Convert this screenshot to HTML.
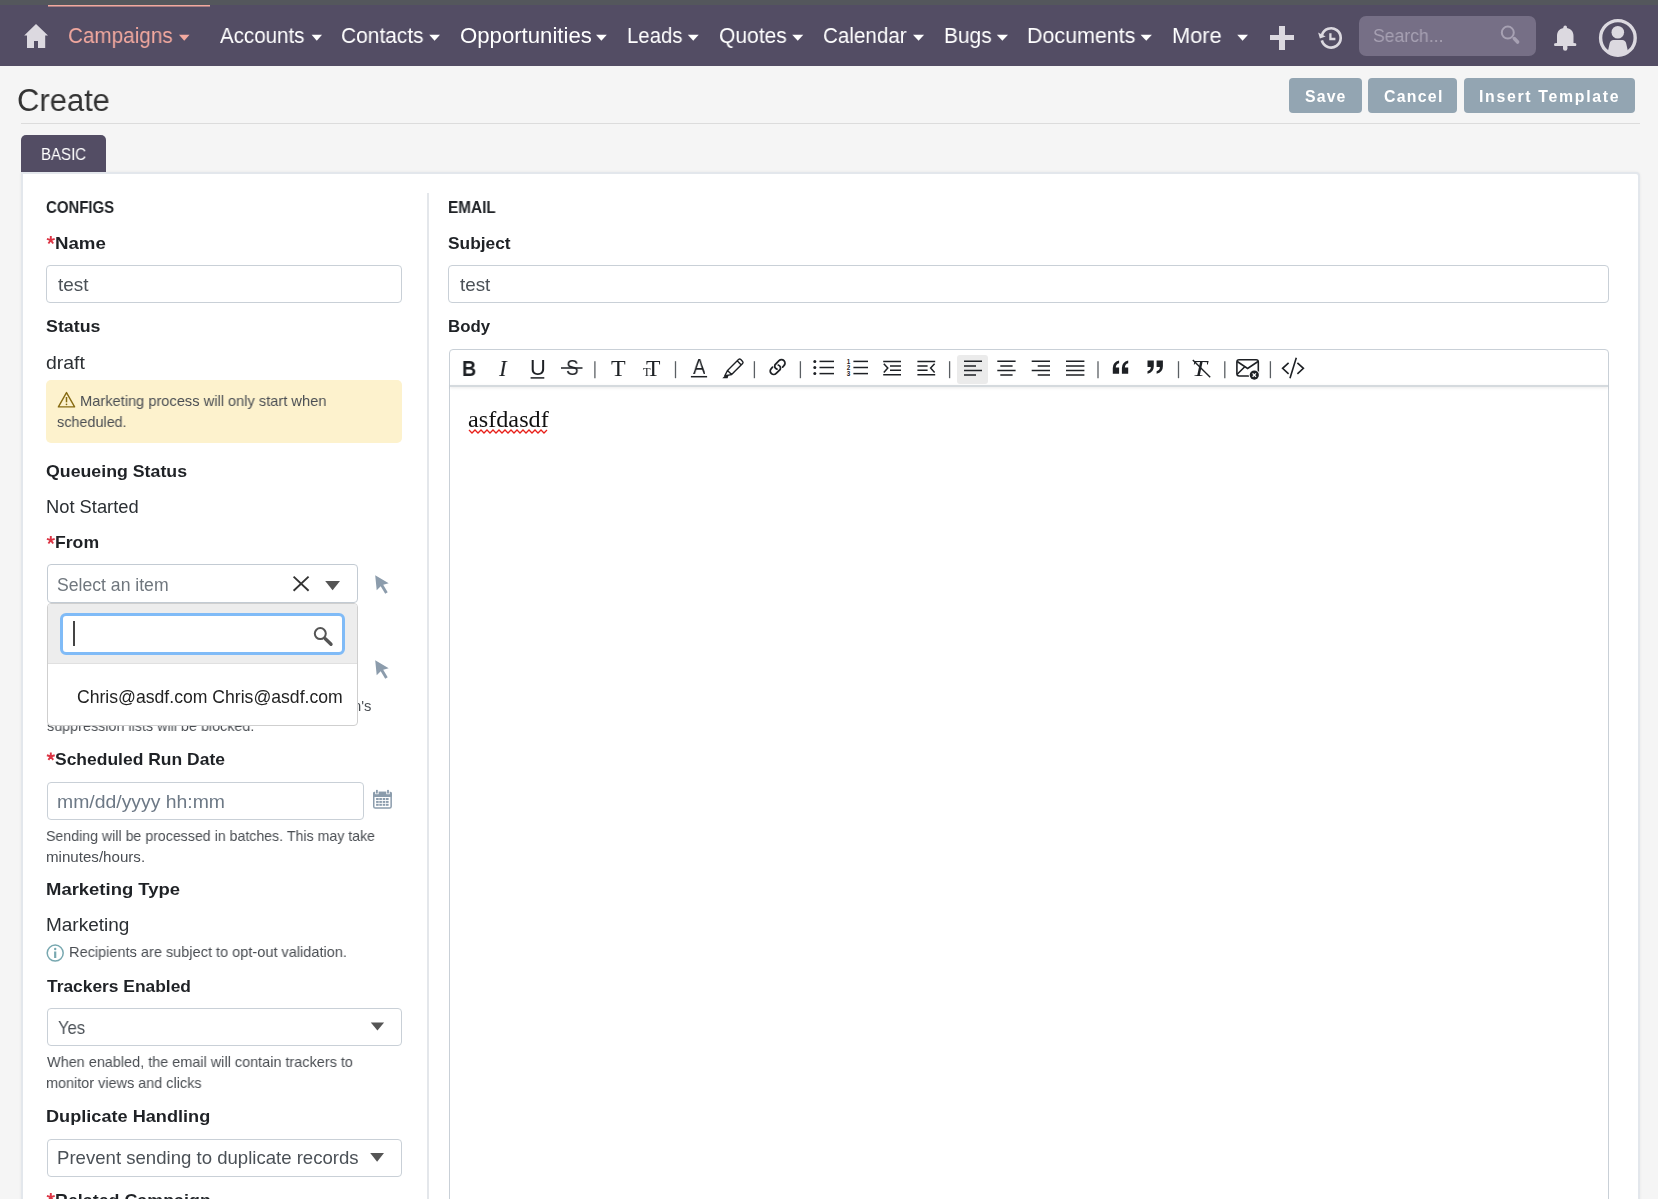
<!DOCTYPE html>
<html><head><meta charset="utf-8"><title>Create</title><style>
*{box-sizing:border-box;margin:0;padding:0}
html,body{width:1658px;height:1199px;overflow:hidden;background:#f5f5f5;font-family:"Liberation Sans",sans-serif}
.a{position:absolute}
.t{position:absolute;white-space:nowrap;line-height:0;transform-origin:0 0;will-change:transform}
svg{position:absolute;overflow:visible}
</style></head>
<body>
<div class="a" style="left:0;top:0;width:1658px;height:5px;background:#54575c"></div>
<div class="a" style="left:0;top:5px;width:1658px;height:61px;background:#534d64"></div>
<div class="a" style="left:48px;top:5px;width:162px;height:1px;background:#f3a99f"></div><div class="a" style="left:48px;top:6px;width:162px;height:1px;background:#a77d83"></div>
<svg style="left:0;top:0" width="1" height="1"><path d="M36 24 L48 35.5 L45.2 35.5 L45.2 48 L38 48 L38 41 L34 41 L34 48 L27 48 L27 35.5 L24.2 35.5 Z" fill="#dcd9e0"/></svg>
<svg style="left:0;top:0" width="1" height="1"><path d="M179 34.8 L189.5 34.8 L184.25 40.8 Z" fill="#f3a99f"/></svg>
<svg style="left:0;top:0" width="1" height="1"><path d="M311.6 34.8 L322 34.8 L316.8 40.8 Z" fill="#ffffff"/></svg>
<svg style="left:0;top:0" width="1" height="1"><path d="M429.2 34.8 L440 34.8 L434.6 40.8 Z" fill="#ffffff"/></svg>
<svg style="left:0;top:0" width="1" height="1"><path d="M596 34.8 L606.8 34.8 L601.4 40.8 Z" fill="#ffffff"/></svg>
<svg style="left:0;top:0" width="1" height="1"><path d="M687.8 34.8 L698.7 34.8 L693.25 40.8 Z" fill="#ffffff"/></svg>
<svg style="left:0;top:0" width="1" height="1"><path d="M792.2 34.8 L803.3 34.8 L797.75 40.8 Z" fill="#ffffff"/></svg>
<svg style="left:0;top:0" width="1" height="1"><path d="M913 34.8 L924.1 34.8 L918.55 40.8 Z" fill="#ffffff"/></svg>
<svg style="left:0;top:0" width="1" height="1"><path d="M996.8 34.8 L1008 34.8 L1002.4 40.8 Z" fill="#ffffff"/></svg>
<svg style="left:0;top:0" width="1" height="1"><path d="M1140.6 34.8 L1151.9 34.8 L1146.25 40.8 Z" fill="#ffffff"/></svg>
<svg style="left:0;top:0" width="1" height="1"><path d="M1237.2 34.8 L1248 34.8 L1242.6 40.8 Z" fill="#ffffff"/></svg>
<div class="a" style="left:1279.2px;top:26px;width:6px;height:24px;background:#dcd9e0"></div>
<div class="a" style="left:1270px;top:35px;width:24px;height:5.2px;background:#dcd9e0"></div>
<svg style="left:0;top:0" width="1" height="1"><path d="M1321.83 40.38 A9.6 9.6 0 1 0 1321.92 35.09" fill="none" stroke="#dcd9e0" stroke-width="2.7"/><path d="M1318.1 32.6 L1325.6 36.6 L1319.9 38.4 Z" fill="#dcd9e0"/><path d="M1330.4 33.2 L1330.4 39 L1335.4 39" fill="none" stroke="#dcd9e0" stroke-width="2.3"/></svg>
<div class="a" style="left:1359px;top:16px;width:177px;height:40px;border-radius:7px;background:#766f86"></div>
<svg style="left:0;top:0" width="1" height="1"><circle cx="1507.8" cy="32.6" r="6" fill="none" stroke="#a7a1b3" stroke-width="2"/><path d="M1514.3 38.6 L1517.6 42" stroke="#a7a1b3" stroke-width="3.6" stroke-linecap="round"/></svg>
<svg style="left:0;top:0" width="1" height="1"><circle cx="1565.2" cy="27.2" r="1.8" fill="#dcd9e0"/><path d="M1557 43 L1557 36 C1557 30.5 1560.5 28 1565.2 28 C1569.9 28 1573.5 30.5 1573.5 36 L1573.5 43 L1575.6 43.2 C1576.6 43.5 1576.6 45.8 1575.6 46 L1554.8 46 C1553.8 45.8 1553.8 43.5 1554.8 43.2 Z" fill="#dcd9e0"/><path d="M1563 46 L1563 48.5 A2.2 2.2 0 0 0 1567.4 48.5 L1567.4 46 Z" fill="#dcd9e0"/></svg>
<svg style="left:0;top:0" width="1" height="1"><circle cx="1617.9" cy="37.9" r="17.3" fill="none" stroke="#dcd9e0" stroke-width="3.4"/><circle cx="1617.8" cy="32.3" r="6.3" fill="#dcd9e0"/><path d="M1607.6 52.5 L1609.6 43.5 C1610 41.4 1611.6 40.1 1613.5 40.1 L1622.3 40.1 C1624.2 40.1 1625.8 41.4 1626.2 43.5 L1628.2 52.5 C1622 56.5 1614 56.5 1607.6 52.5 Z" fill="#dcd9e0"/></svg>
<div class="a" style="left:21px;top:123px;width:1619px;height:1px;background:#dcdcdc"></div>
<div class="a" style="left:1289px;top:78px;width:73.0px;height:35px;border-radius:4px;background:#93a5b2"></div>
<div class="a" style="left:1368px;top:78px;width:89.4px;height:35px;border-radius:4px;background:#93a5b2"></div>
<div class="a" style="left:1464px;top:78px;width:171.0px;height:35px;border-radius:4px;background:#93a5b2"></div>
<div class="a" style="left:21px;top:135px;width:85px;height:37px;border-radius:5px 5px 0 0;background:#534d64"></div>
<div class="a" style="left:21px;top:172px;width:1619px;height:1100px;background:#fff;border:2px solid #e3e7ec;border-radius:0 4px 0 0;box-shadow:0 0 3px rgba(0,0,0,0.06)"></div>
<div class="a" style="left:427px;top:193px;width:2px;height:1100px;background:#e4e7eb"></div>
<div class="a" style="left:46px;top:265px;width:356px;height:38px;border:1px solid #c9d0d7;border-radius:4px;background:#fff;"></div>
<div class="a" style="left:448px;top:265px;width:1161px;height:38px;border:1px solid #c9d0d7;border-radius:4px;background:#fff;"></div>
<div class="a" style="left:46px;top:380px;width:356px;height:63px;border-radius:5px;background:#fdf2cd"></div>
<svg style="left:0;top:0" width="1" height="1"><path d="M66.5 392.6 L74.6 406.9 L58.4 406.9 Z" fill="none" stroke="#876b12" stroke-width="1.4" stroke-linejoin="round"/><path d="M66.5 397 L66.5 402.3" stroke="#876b12" stroke-width="1.5"/><circle cx="66.5" cy="404.3" r="0.85" fill="#876b12"/></svg>
<div class="a" style="left:47px;top:564px;width:310.5px;height:38.5px;border:1px solid #c3cbd3;border-radius:4px;background:#fff;"></div>
<svg style="left:0;top:0" width="1" height="1"><path d="M293.6 576.6 L308.6 590.8 M308.6 576.6 L293.6 590.8" stroke="#333" stroke-width="1.9"/><path d="M325.2 581 L340 581 L332.6 590.2 Z" fill="#555"/></svg>
<svg style="left:0;top:0" width="1" height="1"><path d="M375.2 575.3 L388.7 583.3 L383.2 584.8 L387.7 592.3 L385.2 593.8 L380.7 586.3 L376.7 590.3 Z" fill="#8c9cac"/></svg>
<svg style="left:0;top:0" width="1" height="1"><path d="M375.2 660.3 L388.7 668.3 L383.2 669.8 L387.7 677.3 L385.2 678.8 L380.7 671.3 L376.7 675.3 Z" fill="#8c9cac"/></svg>
<div class="a" style="left:46.5px;top:781.5px;width:317.5px;height:38.0px;border:1px solid #c9d0d7;border-radius:4px;background:#fff;"></div>
<svg style="left:0;top:0" width="1" height="1"><rect x="373.75" y="792.4" width="17.4" height="15.7" rx="1.6" fill="none" stroke="#8b9cac" stroke-width="1.5"/><rect x="373" y="791.7" width="18.9" height="5.2" rx="1.5" fill="#8b9cac"/><rect x="375.2" y="791" width="3.4" height="3.2" fill="#fff"/><rect x="386.3" y="791" width="3.4" height="3.2" fill="#fff"/><rect x="376" y="789.9" width="1.8" height="3.6" fill="#8b9cac"/><rect x="387.1" y="789.9" width="1.8" height="3.6" fill="#8b9cac"/><rect x="376.1" y="798.0" width="2.6" height="2" fill="#8b9cac"/><rect x="376.1" y="800.9" width="2.6" height="2" fill="#8b9cac"/><rect x="376.1" y="803.8" width="2.6" height="2" fill="#8b9cac"/><rect x="379.3" y="798.0" width="2.6" height="2" fill="#8b9cac"/><rect x="379.3" y="800.9" width="2.6" height="2" fill="#8b9cac"/><rect x="379.3" y="803.8" width="2.6" height="2" fill="#8b9cac"/><rect x="382.7" y="798.0" width="2.6" height="2" fill="#8b9cac"/><rect x="382.7" y="800.9" width="2.6" height="2" fill="#8b9cac"/><rect x="382.7" y="803.8" width="2.6" height="2" fill="#8b9cac"/><rect x="386.0" y="798.0" width="2.6" height="2" fill="#8b9cac"/><rect x="386.0" y="800.9" width="2.6" height="2" fill="#8b9cac"/><rect x="386.0" y="803.8" width="2.6" height="2" fill="#8b9cac"/></svg>
<svg style="left:0;top:0" width="1" height="1"><circle cx="55.2" cy="953.1" r="8" fill="none" stroke="#78a8b0" stroke-width="1.5"/><circle cx="55.2" cy="949" r="1.2" fill="#78a8b0"/><path d="M55.2 951.5 L55.2 958" stroke="#78a8b0" stroke-width="2.2"/></svg>
<div class="a" style="left:47px;top:1007.5px;width:355px;height:38.0px;border:1px solid #c9d0d7;border-radius:4px;background:#fff;"></div>
<svg style="left:0;top:0" width="1" height="1"><path d="M370.8 1022.4 L384.1 1022.4 L377.45 1030.4 Z" fill="#555"/></svg>
<div class="a" style="left:47px;top:1138.5px;width:355px;height:38.0px;border:1px solid #c9d0d7;border-radius:4px;background:#fff;"></div>
<svg style="left:0;top:0" width="1" height="1"><path d="M370.2 1153 L384 1153 L377.1 1161.8 Z" fill="#555"/></svg>
<div class="a" style="left:449px;top:349px;width:1160px;height:900px;border:1.5px solid #c9d0d7;border-radius:4px 4px 0 0;background:#fff"></div>
<div class="a" style="left:450px;top:384.5px;width:1158px;height:2px;background:#d5dade;box-shadow:0 1px 3px rgba(0,0,0,0.10)"></div>
<div class="a" style="left:957.2px;top:354.6px;width:30.5px;height:29.4px;border-radius:3px;background:#ebebeb"></div>
<svg style="left:0;top:0" width="1" height="1"><path d="M50.80 240.20 L50.80 236.10 M50.80 240.20 L54.70 238.93 M50.80 240.20 L53.21 243.52 M50.80 240.20 L48.39 243.52 M50.80 240.20 L46.90 238.93 " stroke="#dc3545" stroke-width="1.9"/></svg>
<svg style="left:0;top:0" width="1" height="1"><path d="M50.80 540.20 L50.80 536.10 M50.80 540.20 L54.70 538.93 M50.80 540.20 L53.21 543.52 M50.80 540.20 L48.39 543.52 M50.80 540.20 L46.90 538.93 " stroke="#dc3545" stroke-width="1.9"/></svg>
<svg style="left:0;top:0" width="1" height="1"><path d="M50.80 756.50 L50.80 752.40 M50.80 756.50 L54.70 755.23 M50.80 756.50 L53.21 759.82 M50.80 756.50 L48.39 759.82 M50.80 756.50 L46.90 755.23 " stroke="#dc3545" stroke-width="1.9"/></svg>
<svg style="left:0;top:0" width="1" height="1"><path d="M50.80 1197.20 L50.80 1193.10 M50.80 1197.20 L54.70 1195.93 M50.80 1197.20 L53.21 1200.52 M50.80 1197.20 L48.39 1200.52 M50.80 1197.20 L46.90 1195.93 " stroke="#dc3545" stroke-width="1.9"/></svg>
<div class="a" style="left:47px;top:603px;width:311px;height:123px;border:1px solid #cfcfcf;border-radius:4px;background:#fff;z-index:5;overflow:hidden"><div style="position:absolute;left:0;top:0;width:100%;height:60px;background:#ededed;border-bottom:1px solid #e0e0e0"></div></div>
<div class="a" style="left:60px;top:612.5px;width:284.5px;height:42px;border:3px solid #80bbf7;border-radius:6px;background:#fff;z-index:6"></div>
<div class="a" style="left:73px;top:621px;width:2px;height:25px;background:#444;z-index:7"></div>
<svg style="left:0;top:0;z-index:7" width="1" height="1"><circle cx="320.3" cy="633.6" r="5.5" fill="none" stroke="#555" stroke-width="2"/><path d="M325.3 638.8 L331 644.3" stroke="#555" stroke-width="3.4" stroke-linecap="round"/></svg>
<svg style="left:0;top:0" width="1" height="1"><path d="M594.9 361.2 L594.9 378.2" stroke="#5a5f63" stroke-width="1.3"/><path d="M675.5 361.2 L675.5 378.2" stroke="#5a5f63" stroke-width="1.3"/><path d="M754.4 361.2 L754.4 378.2" stroke="#5a5f63" stroke-width="1.3"/><path d="M800.4 361.2 L800.4 378.2" stroke="#5a5f63" stroke-width="1.3"/><path d="M949.6 361.2 L949.6 378.2" stroke="#5a5f63" stroke-width="1.3"/><path d="M1098 361.2 L1098 378.2" stroke="#5a5f63" stroke-width="1.3"/><path d="M1178.5 361.2 L1178.5 378.2" stroke="#5a5f63" stroke-width="1.3"/><path d="M1224.8 361.2 L1224.8 378.2" stroke="#5a5f63" stroke-width="1.3"/><path d="M1270.4 361.2 L1270.4 378.2" stroke="#5a5f63" stroke-width="1.3"/><path d="M530.6 377.9 H544.3" stroke="#1e2125" stroke-width="1.5"/><path d="M561 368 H582.5" stroke="#1e2125" stroke-width="1.5"/><path d="M690.9 376.7 H707.1" stroke="#1e2125" stroke-width="1.5"/><path d="M727.5 370.5 L738.5 359.5 Q739.7 358.6 740.8 359.6 L742.6 361.4 Q743.5 362.5 742.6 363.6 L731.6 374.6 Z M737.2 360.8 L741.3 364.9 M727.5 370.5 L724.8 375.8 L731.6 374.6" fill="none" stroke="#1e2125" stroke-width="1.4" stroke-linejoin="round"/><path d="M724.8 375.8 L722.3 378.2 L727.6 378.2 L728.6 375.1 Z" fill="#1e2125"/><g transform="translate(777.6 367.1) rotate(-45)" fill="none" stroke="#1e2125" stroke-width="1.75" stroke-linecap="round"><path d="M3.6 3.5 L5.5 3.5 A3.5 3.5 0 0 0 5.5 -3.5 L-0.2 -3.5 A3.5 3.5 0 0 0 -1.9 1.0"/><path d="M-3.6 -3.5 L-5.5 -3.5 A3.5 3.5 0 0 0 -5.5 3.5 L0.2 3.5 A3.5 3.5 0 0 0 1.9 -1.0"/></g><circle cx="814.8" cy="361.4" r="1.5" fill="#1e2125"/><path d="M819.5 361.4 H834" stroke="#1e2125" stroke-width="1.5"/><path d="M853.4 361.4 H868" stroke="#1e2125" stroke-width="1.5"/><circle cx="814.8" cy="367.5" r="1.5" fill="#1e2125"/><path d="M819.5 367.5 H834" stroke="#1e2125" stroke-width="1.5"/><path d="M853.4 367.5 H868" stroke="#1e2125" stroke-width="1.5"/><circle cx="814.8" cy="373.6" r="1.5" fill="#1e2125"/><path d="M819.5 373.6 H834" stroke="#1e2125" stroke-width="1.5"/><path d="M853.4 373.6 H868" stroke="#1e2125" stroke-width="1.5"/><text x="848.5" y="364.3" font-family="Liberation Sans" font-size="6.3" font-weight="700" text-anchor="middle" fill="#1e2125">1</text><text x="848.5" y="370.0" font-family="Liberation Sans" font-size="6.3" font-weight="700" text-anchor="middle" fill="#1e2125">2</text><text x="848.5" y="375.8" font-family="Liberation Sans" font-size="6.3" font-weight="700" text-anchor="middle" fill="#1e2125">3</text><path d="M883.2 361.4 H901 M890 365.9 H901 M890 370.3 H901 M883.2 374.8 H901" stroke="#1e2125" stroke-width="1.5"/><path d="M883.8 363.7 L887.8 368.1 L883.8 372.5" fill="none" stroke="#1e2125" stroke-width="1.5"/><path d="M917.4 361.4 H935.2 M917.4 365.9 H927.6 M917.4 370.3 H927.6 M917.4 374.8 H935.2" stroke="#1e2125" stroke-width="1.5"/><path d="M934.6 363.7 L930.6 368.1 L934.6 372.5" fill="none" stroke="#1e2125" stroke-width="1.5"/><path d="M964 361.3 H982 M964 365.9 H976 M964 370.5 H982 M964 375.1 H976 " stroke="#1e2125" stroke-width="1.5"/><path d="M997.3 361.3 H1015.5999999999999 M1000.3 365.9 H1012.5999999999999 M997.3 370.5 H1015.5999999999999 M1000.3 375.1 H1012.5999999999999 " stroke="#1e2125" stroke-width="1.5"/><path d="M1031.7 361.3 H1050.0 M1037.7 365.9 H1050.0 M1031.7 370.5 H1050.0 M1037.7 375.1 H1050.0 " stroke="#1e2125" stroke-width="1.5"/><path d="M1066 361.3 H1084.4 M1066 365.9 H1084.4 M1066 370.5 H1084.4 M1066 375.1 H1084.4 " stroke="#1e2125" stroke-width="1.5"/><path d="M1112.8 373.8 L1112.8 368.1 Q1112.8 362.1 1119.1 360.6 L1119.1 363.20000000000005 Q1115.8 364.1 1115.8 367.40000000000003 L1119.1 367.40000000000003 L1119.1 373.8 Z" fill="#1e2125"/><path d="M1121.9 373.8 L1121.9 368.1 Q1121.9 362.1 1128.2 360.6 L1128.2 363.20000000000005 Q1124.9 364.1 1124.9 367.40000000000003 L1128.2 367.40000000000003 L1128.2 373.8 Z" fill="#1e2125"/><path d="M1153.8 360.6 L1153.8 366.3 Q1153.8 372.3 1147.5 373.8 L1147.5 371.20000000000005 Q1150.8 370.3 1150.8 367.0 L1147.5 367.0 L1147.5 360.6 Z" fill="#1e2125"/><path d="M1162.8999999999999 360.6 L1162.8999999999999 366.3 Q1162.8999999999999 372.3 1156.6 373.8 L1156.6 371.20000000000005 Q1159.8999999999999 370.3 1159.8999999999999 367.0 L1156.6 367.0 L1156.6 360.6 Z" fill="#1e2125"/><path d="M1192.8 359.9 L1210.2 377.3" stroke="#1e2125" stroke-width="1.4"/><rect x="1236.9" y="359.7" width="21.4" height="16.3" rx="2.2" fill="none" stroke="#1e2125" stroke-width="1.6"/><path d="M1237.2 361.5 L1247.6 368.5 L1258 361.5 M1237.2 374.2 L1244.5 367" fill="none" stroke="#1e2125" stroke-width="1.6"/><circle cx="1254.3" cy="375.1" r="5.6" fill="#fff"/><circle cx="1254.3" cy="375.1" r="4.6" fill="#1e2125"/><path d="M1252.6 373.4 L1256 376.8 M1256 373.4 L1252.6 376.8" stroke="#fff" stroke-width="1.3"/><path d="M1288.6 362.8 L1282.6 368.3 L1288.6 373.8 M1297.4 362.8 L1303.4 368.3 L1297.4 373.8 M1296.3 357.8 L1290 378.3" fill="none" stroke="#1e2125" stroke-width="1.6"/></svg>
<svg style="left:0;top:0" width="1" height="1"><path d="M469 430 L472 433 L475 430 L478 433 L481 430 L484 433 L487 430 L490 433 L493 430 L496 433 L499 430 L502 433 L505 430 L508 433 L511 430 L514 433 L517 430 L520 433 L523 430 L526 433 L529 430 L532 433 L535 430 L538 433 L541 430 L544 433 L547 430 " fill="none" stroke="#e8201a" stroke-width="1.3"/></svg>
<div class="t" style="left:67.96px;top:36.25px;font-size:22.17px;font-weight:400;color:#f3a99f;font-family:'Liberation Sans', sans-serif;transform:scaleX(0.9340);">Campaigns</div>
<div class="t" style="left:220.20px;top:36.25px;font-size:22.17px;font-weight:400;color:#ffffff;font-family:'Liberation Sans', sans-serif;transform:scaleX(0.9267);">Accounts</div>
<div class="t" style="left:341.25px;top:36.25px;font-size:22.17px;font-weight:400;color:#ffffff;font-family:'Liberation Sans', sans-serif;transform:scaleX(0.9449);">Contacts</div>
<div class="t" style="left:459.60px;top:36.25px;font-size:22.17px;font-weight:400;color:#ffffff;font-family:'Liberation Sans', sans-serif;">Opportunities</div>
<div class="t" style="left:627.07px;top:36.25px;font-size:22.17px;font-weight:400;color:#ffffff;font-family:'Liberation Sans', sans-serif;transform:scaleX(0.9194);">Leads</div>
<div class="t" style="left:718.95px;top:36.25px;font-size:22.17px;font-weight:400;color:#ffffff;font-family:'Liberation Sans', sans-serif;transform:scaleX(0.9495);">Quotes</div>
<div class="t" style="left:823.37px;top:36.25px;font-size:22.17px;font-weight:400;color:#ffffff;font-family:'Liberation Sans', sans-serif;transform:scaleX(0.9302);">Calendar</div>
<div class="t" style="left:943.53px;top:36.25px;font-size:22.17px;font-weight:400;color:#ffffff;font-family:'Liberation Sans', sans-serif;transform:scaleX(0.9439);">Bugs</div>
<div class="t" style="left:1027.08px;top:36.25px;font-size:22.17px;font-weight:400;color:#ffffff;font-family:'Liberation Sans', sans-serif;transform:scaleX(0.9672);">Documents</div>
<div class="t" style="left:1171.56px;top:36.25px;font-size:22.17px;font-weight:400;color:#ffffff;font-family:'Liberation Sans', sans-serif;transform:scaleX(0.9826);">More</div>
<div class="t" style="left:1373.41px;top:36.45px;font-size:18.12px;font-weight:400;color:#a7a1b3;font-family:'Liberation Sans', sans-serif;transform:scaleX(0.9716);">Search...</div>
<div class="t" style="left:17.25px;top:101.05px;font-size:31.45px;font-weight:400;color:#333333;font-family:'Liberation Sans', sans-serif;transform:scaleX(0.9844);">Create</div>
<div class="t" style="left:1305.10px;top:97.14px;font-size:15.83px;font-weight:700;color:#ffffff;font-family:'Liberation Sans', sans-serif;letter-spacing:1.142px;">Save</div>
<div class="t" style="left:1383.77px;top:97.14px;font-size:15.83px;font-weight:700;color:#ffffff;font-family:'Liberation Sans', sans-serif;letter-spacing:1.281px;">Cancel</div>
<div class="t" style="left:1478.97px;top:97.14px;font-size:15.83px;font-weight:700;color:#ffffff;font-family:'Liberation Sans', sans-serif;letter-spacing:1.694px;">Insert Template</div>
<div class="t" style="left:41.10px;top:154.65px;font-size:16.96px;font-weight:400;color:#ffffff;font-family:'Liberation Sans', sans-serif;transform:scaleX(0.8875);">BASIC</div>
<div class="t" style="left:45.90px;top:208.24px;font-size:15.83px;font-weight:700;color:#1f2226;font-family:'Liberation Sans', sans-serif;transform:scaleX(0.9452);">CONFIGS</div>
<div class="t" style="left:448.10px;top:208.34px;font-size:15.83px;font-weight:700;color:#1f2226;font-family:'Liberation Sans', sans-serif;transform:scaleX(0.9686);">EMAIL</div>
<div class="t" style="left:55.29px;top:243.79px;font-size:16.55px;font-weight:700;color:#1f2226;font-family:'Liberation Sans', sans-serif;transform:scaleX(1.1294);">Name</div>
<div class="t" style="left:448.27px;top:243.59px;font-size:16.55px;font-weight:700;color:#1f2226;font-family:'Liberation Sans', sans-serif;transform:scaleX(1.0487);">Subject</div>
<div class="t" style="left:57.52px;top:285.10px;font-size:17.97px;font-weight:400;color:#4b5157;font-family:'Liberation Sans', sans-serif;transform:scaleX(1.0543);">test</div>
<div class="t" style="left:459.72px;top:285.00px;font-size:17.97px;font-weight:400;color:#4b5157;font-family:'Liberation Sans', sans-serif;transform:scaleX(1.0473);">test</div>
<div class="t" style="left:46.15px;top:327.29px;font-size:16.55px;font-weight:700;color:#1f2226;font-family:'Liberation Sans', sans-serif;transform:scaleX(1.0775);">Status</div>
<div class="t" style="left:447.91px;top:327.29px;font-size:16.55px;font-weight:700;color:#1f2226;font-family:'Liberation Sans', sans-serif;transform:scaleX(1.0181);">Body</div>
<div class="t" style="left:45.82px;top:362.50px;font-size:18.26px;font-weight:400;color:#2b2f33;font-family:'Liberation Sans', sans-serif;transform:scaleX(1.0655);">draft</div>
<div class="t" style="left:79.73px;top:401.10px;font-size:14.78px;font-weight:400;color:#4a4e53;font-family:'Liberation Sans', sans-serif;transform:scaleX(0.9909);">Marketing process will only start when</div>
<div class="t" style="left:57.34px;top:421.90px;font-size:14.78px;font-weight:400;color:#4a4e53;font-family:'Liberation Sans', sans-serif;transform:scaleX(0.9752);">scheduled.</div>
<div class="t" style="left:46.49px;top:471.99px;font-size:16.55px;font-weight:700;color:#1f2226;font-family:'Liberation Sans', sans-serif;transform:scaleX(1.0737);">Queueing Status</div>
<div class="t" style="left:45.73px;top:507.00px;font-size:18.26px;font-weight:400;color:#2b2f33;font-family:'Liberation Sans', sans-serif;transform:scaleX(1.0035);">Not Started</div>
<div class="t" style="left:55.25px;top:543.29px;font-size:16.55px;font-weight:700;color:#1f2226;font-family:'Liberation Sans', sans-serif;transform:scaleX(1.0658);">From</div>
<div class="t" style="left:57.21px;top:584.62px;font-size:17.61px;font-weight:400;color:#70777e;font-family:'Liberation Sans', sans-serif;">Select an item</div>
<div class="t" style="left:178.67px;top:705.60px;font-size:14.78px;font-weight:400;color:#4a4e53;font-family:'Liberation Sans', sans-serif;">Recipients on the campaign's</div>
<div class="t" style="left:46.64px;top:726.10px;font-size:14.78px;font-weight:400;color:#4a4e53;font-family:'Liberation Sans', sans-serif;transform:scaleX(0.9719);">suppression lists will be blocked.</div>
<div class="t" style="left:76.82px;top:696.92px;font-size:17.61px;font-weight:400;color:#222222;font-family:'Liberation Sans', sans-serif;z-index:6;">Chris@asdf.com Chris@asdf.com</div>
<div class="t" style="left:55.26px;top:759.99px;font-size:16.55px;font-weight:700;color:#1f2226;font-family:'Liberation Sans', sans-serif;transform:scaleX(1.0571);">Scheduled Run Date</div>
<div class="t" style="left:56.74px;top:801.90px;font-size:17.97px;font-weight:400;color:#6d7986;font-family:'Liberation Sans', sans-serif;transform:scaleX(1.0797);">mm/dd/yyyy hh:mm</div>
<div class="t" style="left:46.36px;top:836.20px;font-size:14.78px;font-weight:400;color:#4a4e53;font-family:'Liberation Sans', sans-serif;transform:scaleX(0.9597);">Sending will be processed in batches. This may take</div>
<div class="t" style="left:46.02px;top:856.70px;font-size:14.78px;font-weight:400;color:#4a4e53;font-family:'Liberation Sans', sans-serif;transform:scaleX(1.0233);">minutes/hours.</div>
<div class="t" style="left:45.80px;top:890.49px;font-size:16.55px;font-weight:700;color:#1f2226;font-family:'Liberation Sans', sans-serif;transform:scaleX(1.1168);">Marketing Type</div>
<div class="t" style="left:46.08px;top:924.80px;font-size:18.26px;font-weight:400;color:#2b2f33;font-family:'Liberation Sans', sans-serif;transform:scaleX(1.0400);">Marketing</div>
<div class="t" style="left:68.84px;top:952.20px;font-size:14.78px;font-weight:400;color:#4a4e53;font-family:'Liberation Sans', sans-serif;transform:scaleX(0.9843);">Recipients are subject to opt-out validation.</div>
<div class="t" style="left:46.83px;top:986.69px;font-size:16.55px;font-weight:700;color:#1f2226;font-family:'Liberation Sans', sans-serif;transform:scaleX(1.0516);">Trackers Enabled</div>
<div class="t" style="left:57.67px;top:1027.70px;font-size:17.97px;font-weight:400;color:#4b5157;font-family:'Liberation Sans', sans-serif;transform:scaleX(0.9284);">Yes</div>
<div class="t" style="left:47.00px;top:1062.40px;font-size:14.78px;font-weight:400;color:#4a4e53;font-family:'Liberation Sans', sans-serif;transform:scaleX(0.9781);">When enabled, the email will contain trackers to</div>
<div class="t" style="left:46.06px;top:1082.90px;font-size:14.78px;font-weight:400;color:#4a4e53;font-family:'Liberation Sans', sans-serif;transform:scaleX(0.9772);">monitor views and clicks</div>
<div class="t" style="left:45.82px;top:1117.29px;font-size:16.55px;font-weight:700;color:#1f2226;font-family:'Liberation Sans', sans-serif;transform:scaleX(1.0969);">Duplicate Handling</div>
<div class="t" style="left:57.31px;top:1157.80px;font-size:17.97px;font-weight:400;color:#4b5157;font-family:'Liberation Sans', sans-serif;transform:scaleX(1.0351);">Prevent sending to duplicate records</div>
<div class="t" style="left:54.84px;top:1200.99px;font-size:16.55px;font-weight:700;color:#1f2226;font-family:'Liberation Sans', sans-serif;transform:scaleX(1.0803);">Related Campaign</div>
<div class="t" style="left:461.72px;top:368.66px;font-size:22.16px;font-weight:700;color:#1e2125;font-family:'Liberation Sans', sans-serif;transform:scaleX(0.8879);">B</div>
<div class="t" style="left:499.41px;top:368.42px;font-size:23.51px;font-weight:400;color:#1e2125;font-family:'Liberation Serif', serif;font-style:italic;transform:scaleX(0.9738);">I</div>
<div class="t" style="left:529.76px;top:368.30px;font-size:21.45px;font-weight:400;color:#1e2125;font-family:'Liberation Sans', sans-serif;transform:scaleX(1.0224);">U</div>
<div class="t" style="left:566.05px;top:368.30px;font-size:21.45px;font-weight:400;color:#1e2125;font-family:'Liberation Sans', sans-serif;transform:scaleX(0.8842);">S</div>
<div class="t" style="left:611.04px;top:368.22px;font-size:23.51px;font-weight:400;color:#1e2125;font-family:'Liberation Serif', serif;transform:scaleX(1.0193);">T</div>
<div class="t" style="left:642.81px;top:371.76px;font-size:12.37px;font-weight:400;color:#1e2125;font-family:'Liberation Serif', serif;transform:scaleX(1.0038);">T</div>
<div class="t" style="left:645.95px;top:368.22px;font-size:23.51px;font-weight:400;color:#1e2125;font-family:'Liberation Serif', serif;transform:scaleX(1.0046);">T</div>
<div class="t" style="left:692.90px;top:367.45px;font-size:22.46px;font-weight:400;color:#1e2125;font-family:'Liberation Sans', sans-serif;transform:scaleX(0.8305);">A</div>
<div class="t" style="left:1191.74px;top:368.58px;font-size:22.14px;font-weight:400;color:#1e2125;font-family:'Liberation Serif', serif;font-style:italic;transform:scaleX(1.2209);">T</div>
<div class="t" style="left:468.25px;top:419.78px;font-size:22.73px;font-weight:400;color:#111111;font-family:'Liberation Serif', serif;transform:scaleX(1.0667);">asfdasdf</div>
</body></html>
